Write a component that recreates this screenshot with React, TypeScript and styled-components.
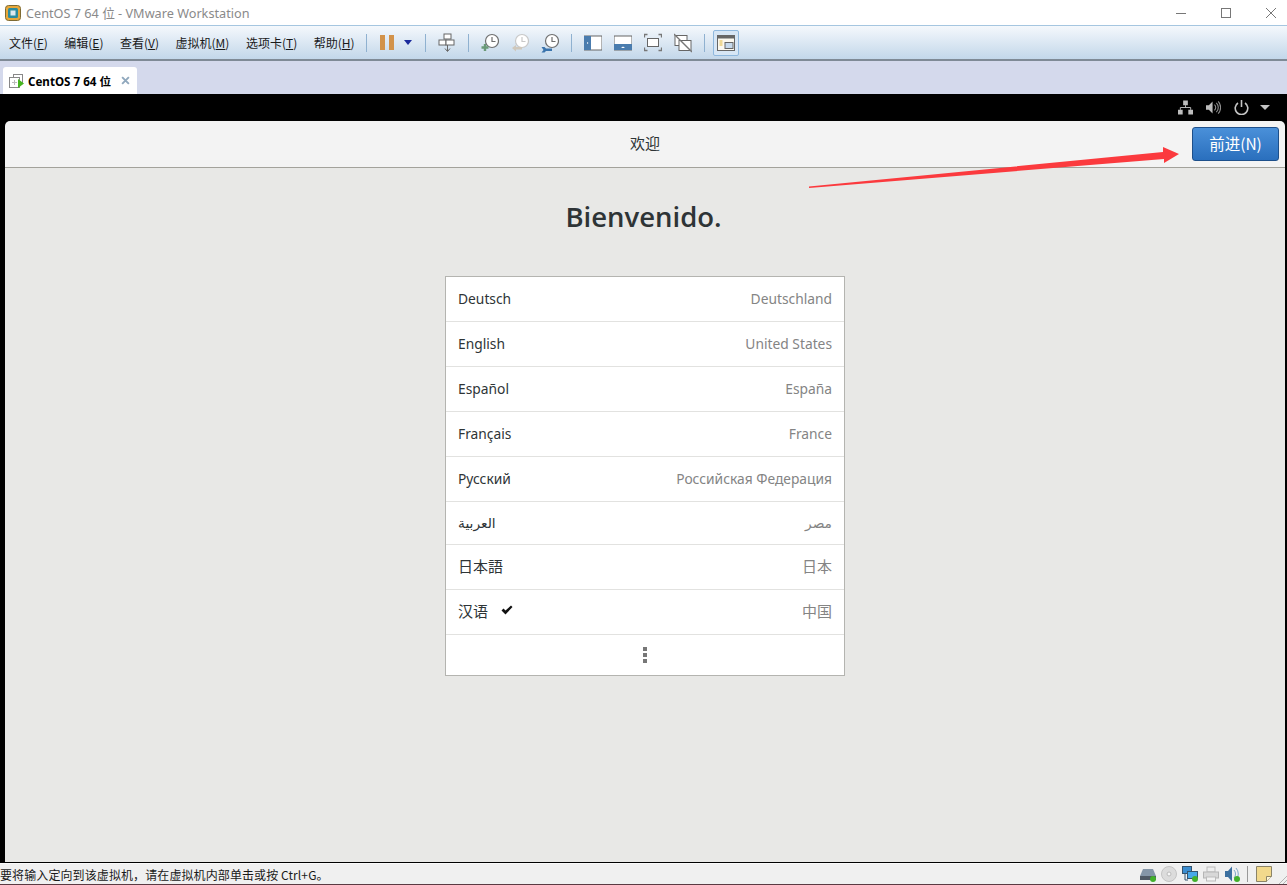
import React from "react";
import styled, { createGlobalStyle } from "styled-components";

const languages = [
  { name: "Deutsch", region: "Deutschland" },
  { name: "English", region: "United States" },
  { name: "Español", region: "España" },
  { name: "Français", region: "France" },
  { name: "Русский", region: "Российская Федерация" },
  { name: "العربية", region: "مصر", short: true },
  { name: "日本語", region: "日本", cjk: true },
  { name: "汉语", region: "中国", cjk: true, checked: true },
];

const menus = [
  { label: "文件", key: "F" },
  { label: "编辑", key: "E" },
  { label: "查看", key: "V" },
  { label: "虚拟机", key: "M" },
  { label: "选项卡", key: "T" },
  { label: "帮助", key: "H" },
];

const Clock = ({ color = "#6f6f6f" }: { color?: string }) => (
  <>
    <circle cx="11" cy="8" r="6.5" fill="#fff" stroke={color} strokeWidth="1.2" />
    <path d="M11 4v4.5h3.5" fill="none" stroke={color} strokeWidth="1.2" />
  </>
);

const App = () => {
  return (
    <Page>
      <GlobalStyle />
      <TitleBar>
        <AppLogo viewBox="0 0 16 16">
          <rect x="0.5" y="0.5" width="15" height="15" rx="3" fill="#e9a83a" stroke="#7d6a33" />
          <rect x="3" y="3" width="10" height="10" rx="1.5" fill="#2c8c9f" />
          <rect x="5.5" y="5.5" width="5" height="5" fill="#dfe9ee" />
        </AppLogo>
        <TitleText>CentOS 7 64 位 - VMware Workstation</TitleText>
        <WindowButtons>
          <svg width="12" height="12" viewBox="0 0 12 12">
            <path d="M1 6.5h10" stroke="#777" />
          </svg>
          <svg width="12" height="12" viewBox="0 0 12 12">
            <rect x="1.5" y="1.5" width="9" height="9" fill="none" stroke="#777" />
          </svg>
          <svg width="12" height="12" viewBox="0 0 12 12">
            <path d="M1 1l10 10M11 1L1 11" stroke="#777" />
          </svg>
        </WindowButtons>
      </TitleBar>

      <MenuBar>
        <Menus>
          {menus.map((m) => (
            <MenuItem key={m.key}>
              {m.label}(<u>{m.key}</u>)
            </MenuItem>
          ))}
        </Menus>
        <Separator />
        <PauseIcon>
          <i />
          <i />
        </PauseIcon>
        <DropCaret viewBox="0 0 8 5">
          <path d="M0 0h8L4 5z" fill="#1a2a9c" />
        </DropCaret>
        <Separator />
        <ToolIcon viewBox="0 0 18 20">
          <rect x="6" y="1" width="7" height="5" fill="#fff" stroke="#666" />
          <rect x="1" y="7" width="7" height="5" fill="#fff" stroke="#666" />
          <rect x="8" y="7" width="8" height="5" fill="#fff" stroke="#666" />
          <path d="M9.5 12v6M7 15.5l2.5 3 2.500-3" fill="none" stroke="#666" />
        </ToolIcon>
        <Separator />
        <ToolIcon viewBox="0 0 18 20">
          <Clock />
          <path d="M4 11v7M0.500 14.500h7" stroke="#6a9a78" strokeWidth="2.4" />
        </ToolIcon>
        <ToolIcon viewBox="0 0 18 20">
          <Clock color="#c8c8c8" />
          <path d="M1 15l4-3v2h6v2.500H5v2z" fill="#cfc8bc" />
        </ToolIcon>
        <ToolIcon viewBox="0 0 18 20">
          <Clock />
          <path d="M0.500 14h3l1.500 1.500h6v2.500H5L3.500 19.500h-3l2-2.500z" fill="#3a74ad" />
        </ToolIcon>
        <Separator />
        <ToolIcon viewBox="0 0 18 20">
          <rect x="0" y="3" width="18" height="14" fill="#fff" stroke="#666" />
          <rect x="0" y="3" width="7" height="14" fill="#4a7cae" />
          <path d="M3 9v2l1.500-1z" fill="#fff" />
        </ToolIcon>
        <ToolIcon viewBox="0 0 18 20">
          <rect x="0" y="3" width="18" height="14" fill="#fff" stroke="#666" />
          <rect x="0" y="11" width="18" height="6" fill="#4a7cae" />
          <path d="M7 15h4L9 13.500z" fill="#fff" />
        </ToolIcon>
        <ToolIcon viewBox="0 0 18 20">
          <rect x="3.500" y="5.500" width="11" height="8" fill="#fff" stroke="#666" />
          <path d="M0.500 4.500v-3h3M14.500 1.500h3v3M17.500 14.500v3h-3M3.500 17.500h-3v-3" fill="none" stroke="#777" strokeWidth="1.300" />
        </ToolIcon>
        <ToolIcon viewBox="0 0 18 20">
          <rect x="1" y="2.500" width="12" height="10" fill="#fff" stroke="#666" />
          <rect x="5" y="7.500" width="12" height="10" fill="#fff" stroke="#666" />
          <path d="M0 1l18 18" stroke="#777" strokeWidth="1.300" />
        </ToolIcon>
        <Separator />
        <ActiveTool>
          <ToolIcon viewBox="0 0 18 20">
            <rect x="0.500" y="2.500" width="17" height="15" fill="#fbf8ef" stroke="#666" />
            <rect x="0.500" y="2.500" width="17" height="3" fill="#666" />
            <path d="M2.500 8h3M2.500 10h3M2.500 12h3" stroke="#e2b93f" />
            <rect x="8" y="9.500" width="8" height="6" fill="#c6d9ec" stroke="#666" />
          </ToolIcon>
        </ActiveTool>
      </MenuBar>

      <TabStrip>
        <Tab>
          <svg width="17" height="16" viewBox="0 0 17 16">
            <rect x="5.500" y="1.500" width="9" height="9" fill="#fff" stroke="#888" />
            <rect x="1.500" y="4.500" width="10" height="10" fill="#fff" stroke="#888" />
            <path d="M4 9.500h5M6.500 7v5" stroke="#bbb" />
            <path d="M10 6l6 4.500-6 4.500z" fill="#46b51f" />
          </svg>
          <TabLabel>CentOS 7 64 位</TabLabel>
          <TabClose viewBox="0 0 8 8">
            <path d="M1 1l6 6M7 1L1 7" stroke="#90a8bd" strokeWidth="1.700" />
          </TabClose>
        </Tab>
      </TabStrip>

      <VmArea>
        <GuestTop>
          <svg width="15" height="15" viewBox="0 0 16 15">
            <path d="M5.500 0h5v5h-5zM0 10h5v5H0zM11 10h5v5h-5z" fill="#bdbdbd" />
            <path d="M8 5v2.500M2.500 10V7.500h11V10" fill="none" stroke="#bdbdbd" />
          </svg>
          <svg width="15" height="15" viewBox="0 0 16 15">
            <path d="M0 5h3l4-4v13l-4-4H0z" fill="#bdbdbd" />
            <path d="M9 4.500a4 4 0 0 1 0 6M11 2.500a7 7 0 0 1 0 10M13 1a9.500 9.500 0 0 1 0 13" fill="none" stroke="#8f8f8f" strokeWidth="1.200" />
          </svg>
          <svg width="15" height="15" viewBox="0 0 15 15">
            <path d="M4 3a6.300 6.300 0 1 0 7 0" fill="none" stroke="#c4c4c4" strokeWidth="1.600" />
            <path d="M7.500 0v7" stroke="#c4c4c4" strokeWidth="1.600" />
          </svg>
          <PowerCaret viewBox="0 0 10 5">
            <path d="M0 0h10L5 5z" fill="#c4c4c4" />
          </PowerCaret>
        </GuestTop>
        <GuestWindow>
          <Header>
            <HeaderTitle>欢迎</HeaderTitle>
            <NextButton>前进(N)</NextButton>
          </Header>
          <Content>
            <Welcome>Bienvenido.</Welcome>
            <LanguageList>
              {languages.map((l) => (
                <LanguageRow key={l.name} $short={l.short} $cjk={l.cjk}>
                  <LanguageName>
                    {l.name}
                    {l.checked && (
                      <CheckMark viewBox="0 0 12 10">
                        <path d="M0.500 5.500L2.500 3.500 4.500 5.500 10 0.500 11.500 2 4.500 9.500z" fill="#111" />
                      </CheckMark>
                    )}
                  </LanguageName>
                  <RegionName>{l.region}</RegionName>
                </LanguageRow>
              ))}
              <MoreRow>
                <MoreDots>
                  <i />
                  <i />
                  <i />
                </MoreDots>
              </MoreRow>
            </LanguageList>
          </Content>
        </GuestWindow>
      </VmArea>

      <StatusBar>
        <StatusText>要将输入定向到该虚拟机，请在虚拟机内部单击或按 Ctrl+G。</StatusText>
        <StatusIcons>
          <StatusIcon viewBox="0 0 16 16">
            <path d="M3 3h10l3 7v4H0v-4z" fill="#8496a8" />
            <rect x="0" y="10" width="16" height="4" fill="#4f5a66" />
            <circle cx="13" cy="13" r="3" fill="#42b02c" />
          </StatusIcon>
          <StatusIcon viewBox="0 0 16 16">
            <circle cx="8" cy="8" r="7.500" fill="#dcdcdc" stroke="#c4c4c4" />
            <circle cx="8" cy="8" r="2" fill="#f6f6f6" stroke="#bbb" />
          </StatusIcon>
          <StatusIcon viewBox="0 0 16 16">
            <rect x="0.500" y="0.500" width="9" height="7" fill="#3b8dd0" stroke="#35546e" />
            <path d="M3 8v6h3" fill="none" stroke="#35546e" />
            <rect x="5.500" y="5.500" width="10" height="7" fill="#47a8e8" stroke="#35546e" />
            <circle cx="13" cy="13" r="3" fill="#42b02c" />
          </StatusIcon>
          <StatusIcon viewBox="0 0 16 16">
            <rect x="4" y="1" width="8" height="5" fill="#eee" stroke="#bbb" />
            <rect x="0.500" y="6" width="15" height="6" fill="#d8d8d8" stroke="#b5b5b5" />
            <rect x="3.500" y="11" width="9" height="4" fill="#f2f2f2" stroke="#bbb" />
          </StatusIcon>
          <StatusIcon viewBox="0 0 16 16">
            <path d="M1 5h3l4-4.500v15L4 11H1z" fill="#3c6f9f" />
            <path d="M10 4a6 6 0 0 1 0 8M12 2a9 9 0 0 1 0 12" fill="none" stroke="#7fa7c7" />
            <circle cx="13" cy="13" r="3" fill="#42b02c" />
          </StatusIcon>
        </StatusIcons>
        <StatusDivider />
        <NoteIcon viewBox="0 0 16 16">
          <path d="M0.500 0.500h15v10l-5 5h-10z" fill="#f2d98c" stroke="#8b8468" />
          <path d="M15.500 10.500h-5v5" fill="#fff6d5" stroke="#8b8468" />
        </NoteIcon>
        <ResizeGrip viewBox="0 0 9 8">
          <path d="M1 8l8-8M5 8l4-4" stroke="#b5b5b5" />
        </ResizeGrip>
      </StatusBar>

      <Arrow viewBox="0 0 380 42" aria-hidden="true">
        <path d="M0 39.500L354 5 354 0 370 7 355 16 355 12 0 41z" fill="#fb3a3e" />
      </Arrow>
    </Page>
  );
};

export default App;

const GlobalStyle = createGlobalStyle`
    html, body {
        margin: 0;
        padding: 0;
        background: #000;
    }
    * {
        box-sizing: border-box;
    }
`;

const Page = styled.div`
    position: relative;
    display: flex;
    flex-direction: column;
    width: 1287px;
    height: 885px;
    overflow: hidden;
    font-family: "Noto Sans", "Noto Sans CJK SC", sans-serif;
`;

const TitleBar = styled.div`
    display: flex;
    align-items: center;
    flex: 0 0 26px;
    padding: 0 0 0 5px;
    background: #fff;
    border-bottom: 1px solid #a5c6e0;
`;

const AppLogo = styled.svg`
    width: 16px;
    height: 16px;
    margin-right: 5px;
`;

const TitleText = styled.span`
    font-size: 12.7px;
    color: #8a8a8a;
    white-space: nowrap;
`;

const WindowButtons = styled.div`
    display: flex;
    align-items: center;
    gap: 33px;
    margin-left: auto;
    padding-right: 10px;
`;

const MenuBar = styled.div`
    display: flex;
    align-items: center;
    flex: 0 0 35px;
    padding-left: 9px;
    background: linear-gradient(#f4f8fc, #c3d7ea);
    border-bottom: 2px solid #7f8a96;
`;

const Menus = styled.div`
    display: flex;
    gap: 16.5px;
    margin-right: 5px;
`;

const MenuItem = styled.span`
    font-family: "Noto Sans CJK SC", "Noto Sans", sans-serif;
    font-size: 12px;
    color: #1a1a1a;
    white-space: nowrap;
`;

const Separator = styled.span`
    width: 1px;
    height: 18px;
    margin: 0 6px;
    background: #8fb1d0;
`;

const PauseIcon = styled.span`
    display: flex;
    gap: 4px;
    margin-left: 7px;

    i {
        display: block;
        width: 5px;
        height: 15px;
        background: #d2924a;
    }
`;

const DropCaret = styled.svg`
    width: 8px;
    height: 5px;
    margin: 0 7px 0 10px;
`;

const ToolIcon = styled.svg`
    width: 18px;
    height: 20px;
    margin: 0 6px;
    flex: none;
`;

const ActiveTool = styled.span`
    display: flex;
    align-items: center;
    justify-content: center;
    width: 26px;
    height: 26px;
    margin-left: 2px;
    background: #d7e6f5;
    border: 1px solid #8fb8de;
    border-radius: 2px;

    ${ToolIcon} {
        margin: 0;
    }
`;

const TabStrip = styled.div`
    display: flex;
    align-items: flex-end;
    flex: 0 0 33px;
    padding-left: 3px;
    background: #d4d9ec;
`;

const Tab = styled.div`
    display: flex;
    align-items: center;
    width: 134px;
    height: 27px;
    padding: 0 7px 0 5px;
    background: #fff;
    border-radius: 3px 3px 0 0;
`;

const TabLabel = styled.span`
    margin-left: 3px;
    font-size: 11.6px;
    font-weight: 700;
    color: #000;
    white-space: nowrap;
`;

const TabClose = styled.svg`
    width: 9px;
    height: 9px;
    margin-left: auto;
`;

const VmArea = styled.div`
    display: flex;
    flex-direction: column;
    flex: 1;
    min-height: 0;
    padding: 0 2px 1px 5px;
    background: #000;
`;

const GuestTop = styled.div`
    display: flex;
    align-items: center;
    justify-content: flex-end;
    flex: 0 0 27px;
    gap: 13px;
    padding-right: 15px;
`;

const PowerCaret = styled.svg`
    width: 10px;
    height: 5px;
    margin-left: -2px;
`;

const GuestWindow = styled.div`
    display: flex;
    flex-direction: column;
    flex: 1;
    min-height: 0;
    overflow: hidden;
    border-radius: 5px 5px 0 0;
`;

const Header = styled.div`
    position: relative;
    display: flex;
    align-items: center;
    justify-content: flex-end;
    flex: 0 0 47px;
    padding-right: 6px;
    background: #f3f3f3;
    border-bottom: 1px solid #a3a29b;
`;

const HeaderTitle = styled.span`
    position: absolute;
    left: 0;
    right: 0;
    top: 9px;
    text-align: center;
    font-family: "Noto Sans CJK SC", sans-serif;
    font-size: 15px;
    line-height: 26px;
    color: #2e3436;
`;

const NextButton = styled.button`
    width: 87px;
    height: 34px;
    margin-bottom: 1px;
    padding: 0 0 2px;
    font-family: "Noto Sans CJK SC", sans-serif;
    font-size: 15.5px;
    color: #fff;
    background: linear-gradient(#4a90d9, #2a6fbd);
    border: 1px solid #1d4f8a;
    border-radius: 3px;
`;

const Content = styled.div`
    display: flex;
    flex-direction: column;
    align-items: center;
    flex: 1;
    background: #e8e8e6;
`;

const Welcome = styled.h1`
    margin: 30px 3px 40px 0;
    font-family: "Open Sans", sans-serif;
    font-size: 27.5px;
    line-height: 38px;
    font-weight: 600;
    color: #2e3436;
`;

const LanguageList = styled.div`
    display: flex;
    flex-direction: column;
    width: 400px;
    background: #fff;
    border: 1px solid #b4b4b0;
`;

const LanguageRow = styled.div<{ $short?: boolean; $cjk?: boolean }>`
    display: flex;
    align-items: center;
    justify-content: space-between;
    flex: 0 0 ${(p) => (p.$short ? "43px" : "45px")};
    padding: 0 12px ${(p) => (p.$cjk ? "4px" : "1px")};
    border-bottom: 1px solid #e2e2e0;
    font-family: "Noto Sans", "DejaVu Sans", "Noto Sans CJK JP", sans-serif;
    font-size: ${(p) => (p.$cjk ? "15px" : "13.8px")};
`;

const LanguageName = styled.span`
    display: flex;
    align-items: center;
    color: #2e3436;
`;

const RegionName = styled.span`
    color: #848484;
`;

const CheckMark = styled.svg`
    width: 12px;
    height: 10px;
    margin-left: 13px;
`;

const MoreRow = styled.div`
    display: flex;
    align-items: center;
    justify-content: center;
    flex: 0 0 40px;
`;

const MoreDots = styled.span`
    display: flex;
    flex-direction: column;
    gap: 2px;

    i {
        display: block;
        width: 4px;
        height: 4px;
        background: #777;
    }
`;

const StatusBar = styled.div`
    display: flex;
    align-items: center;
    flex: 0 0 22px;
    background: #f0f0f0;
    border-top: 1px solid #fafafa;
    border-bottom: 1px solid #5a3a42;
`;

const StatusText = styled.span`
    font-family: "Noto Sans CJK SC", "Noto Sans", sans-serif;
    font-size: 12px;
    letter-spacing: 0.1px;
    color: #1a1a1a;
    white-space: nowrap;
`;

const StatusIcons = styled.div`
    display: flex;
    gap: 5px;
    margin-left: auto;
`;

const StatusIcon = styled.svg`
    width: 16px;
    height: 16px;
`;

const StatusDivider = styled.span`
    width: 1px;
    height: 16px;
    margin: 0 8px 0 7px;
    background: #999;
`;

const NoteIcon = styled.svg`
    width: 16px;
    height: 16px;
`;

const ResizeGrip = styled.svg`
    align-self: flex-end;
    width: 9px;
    height: 8px;
    margin-left: 6px;
`;

const Arrow = styled.svg`
    position: absolute;
    left: 809px;
    top: 147px;
    width: 380px;
    height: 42px;
`;
